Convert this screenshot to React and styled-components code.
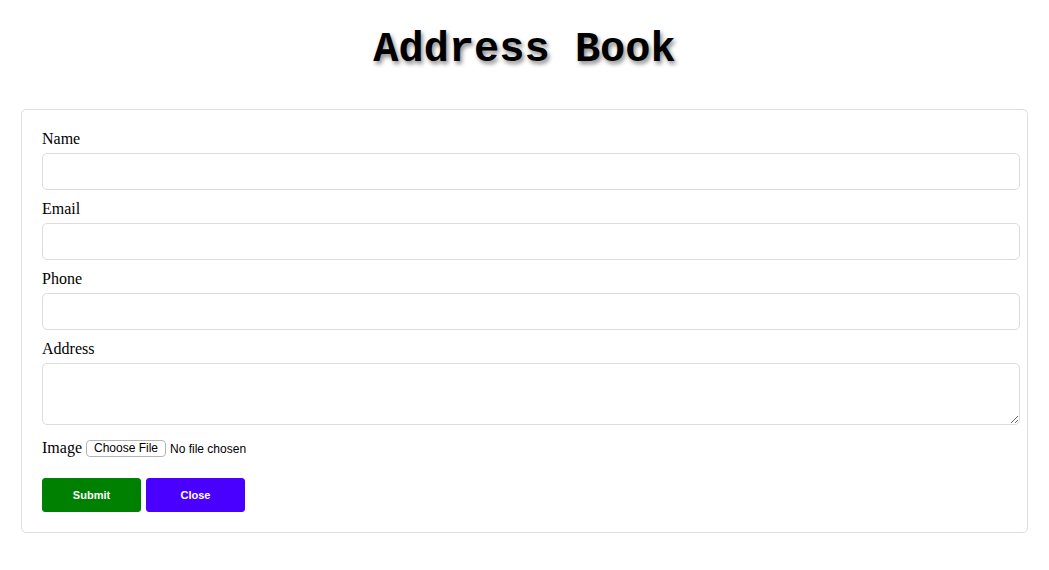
import React from 'react'
import styled, { createGlobalStyle } from 'styled-components'

const Global = createGlobalStyle`
    body {
        margin: 0;
        background: #fff;
        font-family: "Liberation Serif", "Times New Roman", serif;
        color: #000;
    }
`

const Page = styled.div`
    padding: 25px 21px 0 21px;
`

const Title = styled.h1`
    margin: 0 0 34px 0;
    height: 50px;
    line-height: 50px;
    text-align: center;
    font-family: "Liberation Mono", "Courier New", monospace;
    font-size: 42px;
    font-weight: bold;
    text-shadow: 2px 3px 4px rgba(0, 0, 0, 0.45);
`

const Card = styled.form`
    border: 1px solid #dedede;
    border-radius: 5px;
    padding: 20px 7px 20px 20px;
`

const Label = styled.label`
    display: block;
    font-size: 16px;
    line-height: 18px;
    margin-bottom: 5px;
`

const Input = styled.input`
    display: block;
    box-sizing: border-box;
    width: 100%;
    height: 37px;
    margin: 0 0 10px 0;
    border: 1px solid #dcdcdc;
    border-radius: 5px;
    padding: 6px 10px;
    font-size: 14px;
`

const TextArea = styled.textarea`
    display: block;
    box-sizing: border-box;
    width: 100%;
    height: 62px;
    margin: 0 0 10px 0;
    border: 1px solid #dcdcdc;
    border-radius: 5px;
    padding: 6px 10px;
    resize: vertical;
`

const FileRow = styled.div`
    display: flex;
    align-items: center;
    height: 26px;
    margin-bottom: 17px;
    font-size: 16px;

    input {
        margin-left: 4px;
        font-family: "Liberation Sans", Arial, sans-serif;
        font-size: 12px;
    }

    input::file-selector-button {
        height: 17px;
        padding: 0 7px;
        margin-right: 4px;
        background: #fff;
        border: 1px solid #b4b4b4;
        border-radius: 4px;
        font-family: "Liberation Sans", Arial, sans-serif;
        font-size: 12px;
        color: #000;
    }
`

const Buttons = styled.div`
    display: flex;
    gap: 5px;
`

const Button = styled.button`
    width: 99px;
    height: 34px;
    border: 1px solid ${p => p.bg};
    border-radius: 3px;
    background: ${p => p.bg};
    color: #fff;
    font-family: "Liberation Sans", Arial, sans-serif;
    font-size: 11px;
    font-weight: bold;
    cursor: pointer;
`

const App = () => {
    return (
        <Page>
            <Global />
            <Title>Address Book</Title>
            <Card onSubmit={e => e.preventDefault()}>
                <Label>Name</Label>
                <Input type="text" />
                <Label>Email</Label>
                <Input type="email" />
                <Label>Phone</Label>
                <Input type="text" />
                <Label>Address</Label>
                <TextArea />
                <FileRow>
                    Image
                    <input type="file" />
                </FileRow>
                <Buttons>
                    <Button type="submit" bg="#008000">Submit</Button>
                    <Button type="button" bg="#4a00ff">Close</Button>
                </Buttons>
            </Card>
        </Page>
    )
}

export default App
